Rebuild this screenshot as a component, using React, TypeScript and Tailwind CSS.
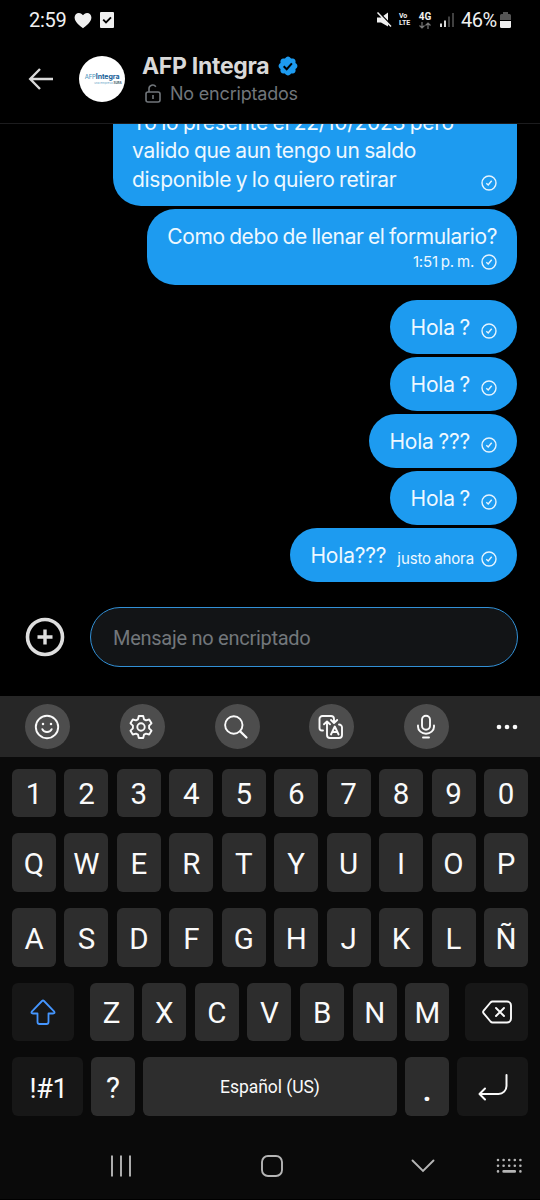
import clsx from 'clsx';
import React from 'react';

interface Message {
  id: number;
  text: string;
  time?: string;
}

const quickMessages: Message[] = [
  { id: 1, text: 'Hola ?' },
  { id: 2, text: 'Hola ?' },
  { id: 3, text: 'Hola ???' },
  { id: 4, text: 'Hola ?' },
  { id: 5, text: 'Hola???', time: 'justo ahora' },
];

const numberRow = ['1', '2', '3', '4', '5', '6', '7', '8', '9', '0'];
const letterRows = [
  ['Q', 'W', 'E', 'R', 'T', 'Y', 'U', 'I', 'O', 'P'],
  ['A', 'S', 'D', 'F', 'G', 'H', 'J', 'K', 'L', 'Ñ'],
];
const bottomLetters = ['Z', 'X', 'C', 'V', 'B', 'N', 'M'];

const SentIcon: React.FC = () => (
  <svg className="size-4 shrink-0" viewBox="0 0 16 16" fill="none" stroke="#e6f4fe" strokeWidth="1.4">
    <circle cx="8" cy="8" r="7" />
    <path d="M5.3 8.2l1.9 1.8 3.5-4.3" />
  </svg>
);

const StatusBar: React.FC = () => (
  <div className="flex h-10 items-center pl-[29px] pr-[29px] text-[#f0f0f0]">
    <span className="text-[20px] leading-none tracking-[-0.3px]">2:59</span>
    <svg className="ml-2 h-[17px] w-[18px]" viewBox="0 0 18 17" fill="#f0f0f0">
      <path d="M9 16.3C6 14 .6 10.2.6 5.6.6 2.8 2.5.9 4.9.9 6.7.9 8.2 1.800 9 3.300 9.800 1.800 11.300.9 13.100.9c2.400 0 4.300 1.900 4.300 4.700C17.400 10.200 12 14 9 16.300z" />
    </svg>
    <svg className="ml-2 h-4 w-[14px]" viewBox="0 0 14 16">
      <rect width="14" height="16" rx="1" fill="#f0f0f0" />
      <path d="M3.200 7.600l2.800 2.800 5-5" fill="none" stroke="#000" strokeWidth="1.900" />
    </svg>
    <div className="ml-auto flex items-center">
      <svg className="h-4 w-4" viewBox="0 0 16 16">
        <path d="M1 5.400h4L12 .5v14L5 10.500H1z" fill="#f0f0f0" />
        <path d="M2.500 0l13.500 14" stroke="#000" strokeWidth="1.600" />
        <path d="M1.500 .5l13.500 14" stroke="#f0f0f0" strokeWidth="1.500" />
      </svg>
      <div className="ml-[7px] flex w-[13px] flex-col text-[7px] font-bold leading-[7px] tracking-[-0.1px]">
        <span>Vo</span>
        <span>LTE</span>
      </div>
      <div className="ml-[6px] flex w-[14px] flex-col items-center">
        <span className="text-[10px] font-bold leading-[10px]">4G</span>
        <svg className="h-[7px] w-3" viewBox="0 0 12 7" fill="none" stroke="#777" strokeWidth="1.200">
          <path d="M3 0v6M.5 3.500L3 6l2.500-2.500M9 7V1M6.500 3.500L9 1l2.500 2.500" />
        </svg>
      </div>
      <svg className="ml-2 h-[14px] w-[14px]" viewBox="0 0 14 14">
        <path d="M1 10.500V14M5 7.500V14" stroke="#f0f0f0" strokeWidth="1.800" />
        <path d="M9 3.500V14M13 0V14" stroke="#555" strokeWidth="1.500" />
      </svg>
      <span className="ml-[7px] w-9 text-[20px] leading-none tracking-[-0.5px]">46%</span>
      <svg className="ml-[3px] h-4 w-[11px]" viewBox="0 0 11 16">
        <path d="M3 0h5v2h1.500Q11 2 11 3.500V8H0V3.500Q0 2 1.500 2H3z" fill="#555" />
        <path d="M0 9h11v5.500q0 1.500-1.500 1.500h-8Q0 16 0 14.500z" fill="#f0f0f0" />
      </svg>
    </div>
  </div>
);

const ChatHeader: React.FC = () => (
  <div className="flex h-[84px] items-start border-b border-[#1c1c1e] pl-7 font-[Inter,sans-serif]">
    <svg className="mt-[27px] h-6 w-[26px]" viewBox="0 0 26 24" fill="none" stroke="#d9d9d9" strokeWidth="2.400">
      <path d="M25 12H2.500M12 2L2.200 12l9.800 10" />
    </svg>
    <div className="ml-[25px] mt-4 flex size-[46px] flex-col items-center justify-center rounded-full bg-white">
      <span className="whitespace-nowrap text-[7px] leading-[8px] tracking-[-0.1px] text-[#4a94bb]">
        <span className="text-[6px]">AFP</span>
        <b className="text-[#195f99]">Integra</b>
      </span>
      <span className="ml-3 whitespace-nowrap text-[3px] leading-[5px] text-[#69a7c8]">
        una empresa <b className="text-[#3d5668]">SURA</b>
      </span>
    </div>
    <div className="ml-[17px] mt-[13px] flex flex-col">
      <div className="flex h-[26px] items-center">
        <span className="w-[129px] whitespace-nowrap text-[23px] font-bold tracking-[-0.3px] text-[#d9d9d9]">AFP Integra</span>
        <svg className="ml-[6px] size-[22px]" viewBox="0 0 22 22">
          <path
            d="M20.396 11c-.018-.646-.215-1.275-.57-1.816-.354-.540-.852-.972-1.438-1.246.223-.607.270-1.264.140-1.897-.131-.634-.437-1.218-.882-1.687-.470-.445-1.053-.750-1.687-.882-.633-.130-1.290-.083-1.897.140-.273-.587-.704-1.086-1.245-1.440S11.647 1.620 11 1.604c-.646.017-1.273.213-1.813.568s-.969.854-1.240 1.440c-.608-.223-1.267-.272-1.902-.140-.635.130-1.220.436-1.690.882-.445.470-.749 1.055-.878 1.688-.130.633-.080 1.290.144 1.896-.587.274-1.087.705-1.443 1.245-.356.540-.555 1.170-.574 1.817.020.647.218 1.276.574 1.817.356.540.856.972 1.443 1.245-.224.606-.274 1.263-.144 1.896.130.634.433 1.218.877 1.688.470.443 1.054.747 1.687.878.633.132 1.290.084 1.897-.136.274.586.705 1.084 1.246 1.439.540.354 1.170.551 1.816.569.647-.016 1.276-.213 1.817-.567s.972-.854 1.245-1.440c.604.239 1.266.296 1.903.164.636-.132 1.220-.447 1.680-.907.460-.460.776-1.044.908-1.681s.075-1.299-.165-1.903c.586-.274 1.084-.705 1.439-1.246.354-.540.551-1.170.569-1.816z"
            fill="#1d9bf0"
          />
          <path d="M6.700 11.200l3 3 5.200-5.800" fill="none" stroke="#000" strokeWidth="2" />
        </svg>
      </div>
      <div className="mt-[2px] flex h-6 items-center pl-[3px]">
        <svg className="h-[19px] w-4" viewBox="0 0 16 19" fill="none" stroke="#71767b" strokeWidth="1.600">
          <rect x="1" y="8" width="14" height="10" rx="2" />
          <path d="M4 8V5a3.700 3.700 0 0 1 6.800-2.200M8 11v4" />
        </svg>
        <span className="ml-[9px] whitespace-nowrap text-[18px] tracking-[-0.2px] text-[#71767b]">No encriptados</span>
      </div>
    </div>
  </div>
);

const MessageList: React.FC = () => (
  <div className="flex h-[458px] flex-col items-end justify-end overflow-hidden pr-[23px] font-[Inter,sans-serif] text-[21px] leading-[28.500px] text-[#eef8ff] [word-spacing:-1px]">
    <div className="flex w-[404px] shrink-0 items-end rounded-[28px] bg-[#1d9bf0] pb-3 pl-[19px] pr-5 pt-3">
      <p className="flex-1 whitespace-nowrap tracking-[-0.3px]">
        Yo lo presente el 22/10/2023 pero
        <br />
        valido que aun tengo un saldo
        <br />
        disponible y lo quiero retirar
      </p>
      <div className="pb-[3px]">
        <SentIcon />
      </div>
    </div>
    <div className="mt-[3px] flex h-[76px] w-[370px] shrink-0 flex-col items-end rounded-[28px] bg-[#1d9bf0] pr-5 pt-[14px]">
      <p className="whitespace-nowrap tracking-[-0.4px]">Como debo de llenar el formulario?</p>
      <div className="flex h-5 items-center gap-[7px]">
        <span className="text-[15px] leading-5 tracking-[-0.2px]">1:51 p. m.</span>
        <SentIcon />
      </div>
    </div>
    <div className="mt-[15px] flex shrink-0 flex-col items-end gap-[3px]">
      {quickMessages.map((message) => (
        <div key={message.id} className="flex h-[54px] items-center rounded-full bg-[#1d9bf0] pl-5 pr-5">
          <span className="mt-[2px] whitespace-nowrap tracking-[-0.2px]">{message.text}</span>
          {message.time && (
            <span className="-mr-1 ml-[11px] mt-[7px] whitespace-nowrap text-[15px] leading-5 tracking-[-0.1px]">{message.time}</span>
          )}
          <div className="ml-[11px] mt-[7px]">
            <SentIcon />
          </div>
        </div>
      ))}
    </div>
  </div>
);

const Composer: React.FC = () => (
  <div className="flex h-[114px] items-start pl-[25px] pt-[25px]">
    <svg className="mt-[10px] size-10" viewBox="0 0 40 40" fill="none" stroke="#dedede">
      <circle cx="20" cy="20" r="17.500" strokeWidth="3.600" />
      <path d="M20 12.500v15M12.500 20h15" strokeWidth="3.400" />
    </svg>
    <div className="ml-[25px] flex h-[60px] w-[428px] items-center rounded-full border-[1.5px] border-[#3290d6] bg-[#121416] pl-[22px] pt-px text-[20px] tracking-[-0.27px] text-[#72777b]">
      Mensaje no encriptado
    </div>
  </div>
);

const ToolButton: React.FC<{ children: React.ReactNode }> = ({ children }) => (
  <div className="flex size-[45px] items-center justify-center rounded-full bg-[#4d4d4d]">
    <svg className="size-7 -translate-x-px" viewBox="0 0 28 28" fill="none" stroke="#fafafa" strokeWidth="1.900" strokeLinecap="round" strokeLinejoin="round">
      {children}
    </svg>
  </div>
);

const Toolbar: React.FC = () => (
  <div className="flex h-[61px] items-center gap-[49.8px] bg-[#262626] pl-[25px]">
    <ToolButton>
      <circle cx="14" cy="14" r="11.200" />
      <path d="M9.300 16.200c1.600 3.700 7.800 3.700 9.400 0" />
      <path d="M10 11h.01M18 11h.01" strokeWidth="2.500" />
    </ToolButton>
    <ToolButton>
      <path d="M11.800 3h4.400l.8 3.300 2 1.100 3.200-.9 2.300 3.800-2.400 2.400v2.600l2.400 2.400-2.300 3.800-3.200-.9-2 1.100-.8 3.300h-4.400l-.8-3.300-2-1.100-3.200.9-2.300-3.800 2.400-2.400v-2.600l-2.400-2.400 2.300-3.800 3.200.9 2-1.100z" />
      <circle cx="14" cy="14" r="3.700" />
    </ToolButton>
    <ToolButton>
      <circle cx="11.800" cy="12" r="8.700" />
      <path d="M18.200 18.400l6.300 6.100" strokeWidth="2.200" />
    </ToolButton>
    <ToolButton>
      <path d="M6 17.500H5a2.500 2.500 0 0 1-2.500-2.500V6A3 3 0 0 1 5.500 3H14a3 3 0 0 1 3 3v3.500M14 7l3 3 3.200-3" />
      <path d="M22 11.500a3 3 0 0 1 3 3V22a3 3 0 0 1-3 3h-9a3 3 0 0 1-3-3V9M7 11.300L10 8.500l3 2.800" />
      <path d="M14 21.500l3.800-8 3.800 8M15.200 19h5.200" />
    </ToolButton>
    <ToolButton>
      <rect x="10" y="2.800" width="8" height="14" rx="4" />
      <path d="M6 12.500v1.200a8 7 0 0 0 16 0v-1.200M11 24.500h6" />
    </ToolButton>
    <svg className="-ml-1 h-5 w-6" viewBox="0 0 24 20" fill="#fafafa">
      <circle cx="4" cy="10" r="2.300" />
      <circle cx="12" cy="10" r="2.300" />
      <circle cx="20" cy="10" r="2.300" />
    </svg>
  </div>
);

interface KeyProps {
  children: React.ReactNode;
  className?: string;
  dark?: boolean;
}

const Key: React.FC<KeyProps> = ({ children, className, dark }) => (
  <div
    className={clsx(
      'flex h-full items-center justify-center rounded-[6px] text-[29.5px] leading-none text-[#fafafa]',
      dark ? 'bg-[#171717]' : 'bg-[#2d2d2d]',
      className ?? 'w-11 pt-1',
    )}
  >
    {children}
  </div>
);

const Keyboard: React.FC = () => (
  <div className="flex h-[375px] flex-col gap-4 bg-[#0a0a0a] px-3 pt-3">
    <div className="flex h-12 justify-between">
      {numberRow.map((key) => (
        <Key key={key}>{key}</Key>
      ))}
    </div>
    {letterRows.map((row) => (
      <div key={row[0]} className="flex h-[59px] justify-between">
        {row.map((key) => (
          <Key key={key}>{key}</Key>
        ))}
      </div>
    ))}
    <div className="flex h-[58px] justify-between">
      <Key dark className="w-[62px]">
        <svg className="size-7" viewBox="0 0 28 28" fill="none" stroke="#4596ff" strokeWidth="1.800" strokeLinejoin="round">
          <path d="M13 3Q14 2.100 15 3l10 10.300q1.500 2.200-1 2.200h-4.500V24q0 2-2 2h-7q-2 0-2-2v-8.500H4q-2.500 0-1-2.200z" />
        </svg>
      </Key>
      <div className="flex w-[360px] justify-between">
        {bottomLetters.map((key) => (
          <Key key={key}>{key}</Key>
        ))}
      </div>
      <Key dark className="w-[63px]">
        <svg className="h-6 w-[30px]" viewBox="0 0 30 24" fill="none" stroke="#fafafa" strokeWidth="1.900" strokeLinecap="round" strokeLinejoin="round">
          <path d="M10.500 1.500H25a4 4 0 0 1 4 4v13a4 4 0 0 1-4 4H10.500q-1 0-2-1L1.700 13.300q-1.200-1.300 0-2.600L8.500 2.500q1-1 2-1zM14 8l8 8M22 8l-8 8" />
        </svg>
      </Key>
    </div>
    <div className="flex h-[59px] justify-between">
      <Key dark className="w-[71px] pl-[2px] pt-1">
        <span className="text-[27.5px] tracking-[-0.5px]">!#1</span>
      </Key>
      <Key>?</Key>
      <Key className="w-[254px] pt-[2px]">
        <span className="text-[17.5px] tracking-[-0.05px]">Español (US)</span>
      </Key>
      <Key className="w-11 items-end pb-[10px]">
        <span className="font-bold">.</span>
      </Key>
      <Key dark className="w-[71px]">
        <svg className="h-7 w-8" viewBox="0 0 32 28" fill="none" stroke="#fafafa" strokeWidth="2" strokeLinecap="round" strokeLinejoin="round">
          <path d="M29.500 2v11a8 8 0 0 1-8 8H3M8 15.500L2.500 21 8 26.500" />
        </svg>
      </Key>
    </div>
  </div>
);

const NavBar: React.FC = () => (
  <div className="flex h-[68px] items-center border-b border-black bg-[#0a0a0a] pl-[110px] pr-[17px]">
    <svg className="h-[22px] w-[22px]" viewBox="0 0 22 22" stroke="#b5b5b5" strokeWidth="1.900">
      <path d="M2 .5v21M11 .5v21M20 .5v21" />
    </svg>
    <svg className="ml-[128px] size-6" viewBox="0 0 24 24" fill="none" stroke="#b5b5b5" strokeWidth="1.900">
      <rect x="2" y="2" width="20" height="20" rx="6" />
    </svg>
    <svg className="ml-[127px] h-[14px] w-6" viewBox="0 0 24 14" fill="none" stroke="#b5b5b5" strokeWidth="1.900" strokeLinecap="round">
      <path d="M1.500 1.500L12 12 22.500 1.500" />
    </svg>
    <svg className="ml-auto h-4 w-[27px]" viewBox="0 0 27 16" stroke="#b5b5b5" strokeWidth="2.600" strokeLinecap="round">
      <path d="M2 2h.01M7.600 2h.01M13.200 2h.01M18.800 2h.01M24.400 2h.01M2 7.700h.01M7.600 7.700h.01M13.200 7.700h.01M18.800 7.700h.01M24.400 7.700h.01M2 13.400h.01M7.600 13.400h11.200M24.400 13.400h.01" />
    </svg>
  </div>
);

const App: React.FC = () => {
  return (
    <div className="flex h-[1200px] w-[540px] flex-col overflow-hidden bg-black font-[Roboto,sans-serif]">
      <StatusBar />
      <ChatHeader />
      <MessageList />
      <Composer />
      <Toolbar />
      <Keyboard />
      <NavBar />
    </div>
  );
};

export default App;
